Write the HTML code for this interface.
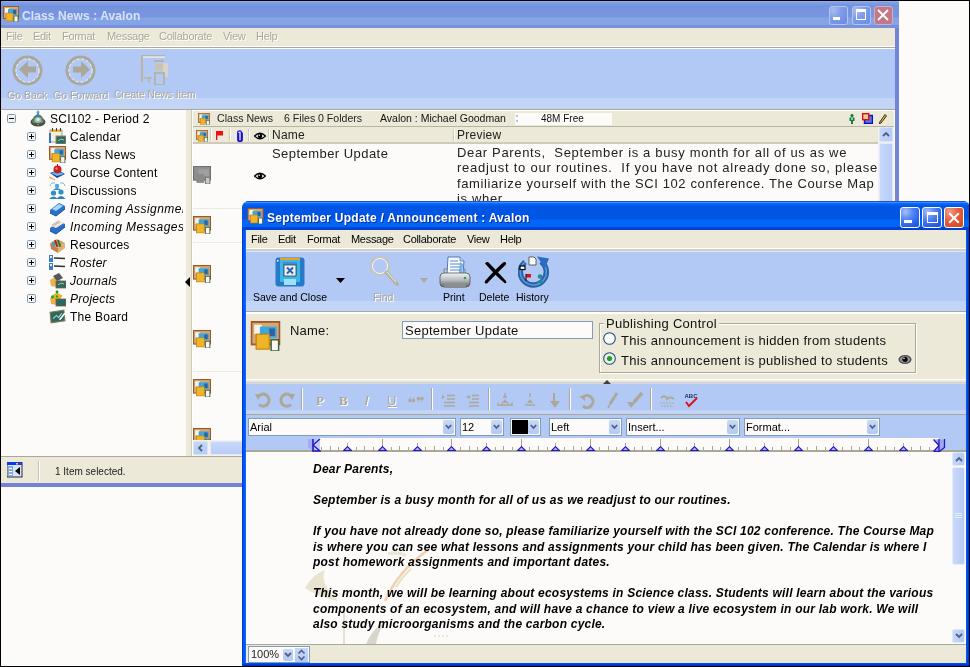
<!DOCTYPE html>
<html><head><meta charset="utf-8">
<style>
*{margin:0;padding:0;box-sizing:border-box}
html,body{width:970px;height:667px;overflow:hidden;background:#fcfbf9;font-family:"Liberation Sans",sans-serif;color:#000}
.a{position:absolute}
.t{position:absolute;white-space:pre;line-height:1}
#frame{position:absolute;left:0;top:0;width:970px;height:667px;border:1px solid #000;z-index:100;pointer-events:none}
/* background window */
#bg{position:absolute;left:0;top:0;width:899px;height:487px;background:#7184d8;overflow:hidden;will-change:transform}
#bgtitle{position:absolute;left:1px;top:1px;width:898px;height:27px;background:linear-gradient(#8eaef0 0,#8eaef0 1px,#7d9de4 1px,#7d9de4 3px,#7592dc 4px,#7896e0 16px,#84a4e6 17px,#84a4e6 24px,#7890dc 24px,#7a90dc 27px)}
.menu{position:absolute;height:18px;background:#ece9d8}
.dis{color:#aca899;text-shadow:1px 1px 0 #fff}
.mi{position:absolute;white-space:pre;font-size:11px;line-height:1;letter-spacing:-0.3px}
.tb{position:absolute;background:#b1c9f4}
.band{position:absolute;background:#c3d5f6}
/* foreground */
#fg{position:absolute;left:242px;top:201px;width:728px;height:466px;background:#0a4fe0;border-radius:7px 7px 0 0;overflow:hidden;will-change:transform}
#fgtitle{position:absolute;left:0;top:0;width:728px;height:29px;background:linear-gradient(#2050d0 0,#2050d0 1px,#3d8fff 1px,#3d8fff 2px,#0a6cff 2px,#0062f6 4px,#0055e5 5px,#0055e5 18px,#0066f8 19px,#0066f8 26px,#0044d4 26px,#0040d0 29px)}
</style></head><body>


<svg width="0" height="0" style="position:absolute">
 <defs>
  <symbol id="cn" viewBox="0 0 16 16">
   <rect x="0.5" y="0.5" width="15" height="12" fill="#d8a870" stroke="#9a5a2a"/>
   <rect x="2" y="2" width="4" height="5" fill="#f4f4f0"/>
   <rect x="5" y="3" width="9" height="6" fill="#3aa8e0"/>
   <rect x="10" y="4" width="3" height="4" fill="#3060a0"/>
   <rect x="3" y="7" width="7" height="8" fill="#f0b428" stroke="#c08010" stroke-width="0.6"/>
   <rect x="11" y="10" width="4" height="6" fill="#f8f8f0" stroke="#406040" stroke-width="0.8"/>
  </symbol>
  <symbol id="cng" viewBox="0 0 16 16">
   <rect x="0.5" y="0.5" width="15" height="12" fill="#909090" stroke="#707070"/>
   <rect x="5" y="3" width="9" height="6" fill="#a0a0a0"/>
   <rect x="3" y="7" width="7" height="8" fill="#8a8a8a"/>
   <rect x="11" y="10" width="4" height="6" fill="#c8c8c8" stroke="#707070" stroke-width="0.8"/>
  </symbol>
  <symbol id="plus" viewBox="0 0 9 9">
   <rect x="0.5" y="0.5" width="8" height="8" rx="1" fill="#f4f2ea" stroke="#7a98bc"/>
   <rect x="2" y="4" width="5" height="1" fill="#000"/>
   <rect x="4" y="2" width="1" height="5" fill="#000"/>
  </symbol>
  <symbol id="minus" viewBox="0 0 9 9">
   <rect x="0.5" y="0.5" width="8" height="8" rx="1" fill="#f4f2ea" stroke="#7a98bc"/>
   <rect x="2" y="4" width="5" height="1" fill="#000"/>
  </symbol>
  <symbol id="eye" viewBox="0 0 12 8">
   <path d="M0.5 4 Q6 -1.5 11.5 4 Q6 9.5 0.5 4Z" fill="#fff" stroke="#000" stroke-width="1.2"/>
   <circle cx="6" cy="4" r="2.3" fill="#000"/>
   <circle cx="5.3" cy="3.3" r="0.7" fill="#fff"/>
  </symbol>
  <symbol id="board" viewBox="0 0 16 16">
   <path d="M1 4 L14 2 L15 12 L2 14Z" fill="#2a6a60" stroke="#8a7a50" stroke-width="1"/>
   <path d="M4 10 L7 7 L9 9 L12 5" stroke="#b8d8d0" stroke-width="1" fill="none"/>
   <path d="M10 11 L15 5" stroke="#fff" stroke-width="1.5"/>
  </symbol>
 </defs>
</svg>
<div id="bg">
  <div id="bgtitle"></div>
  <div class="menu" style="left:1px;top:28px;width:894px"></div>
  <div class="a" style="left:1px;top:46px;width:894px;height:1px;background:#fff"></div>
  <div class="a" style="left:1px;top:47px;width:894px;height:1px;background:#aca899"></div>
  <div class="a" style="left:1px;top:48px;width:894px;height:1px;background:#fff"></div>
  <div class="tb" style="left:1px;top:49px;width:894px;height:50px"></div>
  <div class="band" style="left:1px;top:98px;width:894px;height:11px"></div>
  <div class="a" style="left:1px;top:109px;width:894px;height:1px;background:#aca899"></div>
  <!-- tree -->
  <div class="a" style="left:1px;top:110px;width:185px;height:346px;background:#fcfbf9"></div>
  <div class="a" style="left:186px;top:110px;width:7px;height:346px;background:#ece9d8"></div>
  <!-- list -->
  <div class="a" style="left:193px;top:110px;width:702px;height:346px;background:#fcfbf9"></div>
  <div class="a" style="left:1px;top:456px;width:894px;height:1px;background:#aca899"></div>
  <div class="a" style="left:1px;top:457px;width:894px;height:26px;background:#ece9d8"></div>

  <!-- bg title -->
  <div class="t" style="left:22px;top:10px;font-size:12px;font-weight:bold;color:#d8e2f8;letter-spacing:0.1px">Class News : Avalon</div>
  <!-- bg menu -->
  <div class="mi dis" style="left:6px;top:31px">File</div>
  <div class="mi dis" style="left:33px;top:31px">Edit</div>
  <div class="mi dis" style="left:62px;top:31px">Format</div>
  <div class="mi dis" style="left:107px;top:31px">Message</div>
  <div class="mi dis" style="left:159px;top:31px">Collaborate</div>
  <div class="mi dis" style="left:223px;top:31px">View</div>
  <div class="mi dis" style="left:256px;top:31px">Help</div>
  <!-- bg toolbar labels -->
  <div class="t dis" style="left:7px;top:90px;font-size:10.5px">Go Back</div>
  <div class="t dis" style="left:53px;top:90px;font-size:10.5px">Go Forward</div>
  <div class="t dis" style="left:114px;top:90px;font-size:10.2px">Create News Item</div>

  <!-- tree icons -->
  <svg class="a" style="left:7px;top:114px" width="9" height="9"><use href="#minus"/></svg>
  <svg class="a" style="left:30px;top:110px" width="16" height="17" viewBox="0 0 16 17">
   <ellipse cx="8" cy="12" rx="7.5" ry="4.5" fill="#4a4e48"/>
   <path d="M2 12 Q3 5 8 4 Q13 5 14 12 Q8 15 2 12Z" fill="#5a7a70"/>
   <ellipse cx="8" cy="10" rx="3.5" ry="3" fill="#90c0b0"/>
   <ellipse cx="8" cy="9.5" rx="1.8" ry="1.5" fill="#d8f0e8"/>
   <circle cx="4" cy="12" r="0.8" fill="#c0a030"/><circle cx="12" cy="12" r="0.8" fill="#c0a030"/><circle cx="8" cy="14.5" r="0.8" fill="#c0a030"/>
   <path d="M8 1 V5" stroke="#4a8ae0" stroke-width="2"/>
   <path d="M6 2.5 L8 0 L10 2.5Z" fill="#6aa8f0"/>
  </svg>
  <svg class="a" style="left:27px;top:132px" width="9" height="9"><use href="#plus"/></svg>
  <svg class="a" style="left:49px;top:128px" width="17" height="16" viewBox="0 0 17 16">
   <rect x="1" y="2" width="12" height="12" fill="#f4f0e0" stroke="#8aa0c8" stroke-width="1"/>
   <rect x="1" y="2" width="12" height="2" fill="#f0b030"/>
   <rect x="3" y="0" width="1" height="3" fill="#404040"/><rect x="7" y="0" width="1" height="3" fill="#404040"/><rect x="11" y="0" width="1" height="3" fill="#404040"/>
   <rect x="0" y="5" width="2" height="10" fill="#3a70c0"/>
   <rect x="7" y="8" width="10" height="8" fill="#2a6a60" stroke="#a08860" stroke-width="1"/>
   <path d="M9 13 L12 11 L15 12" stroke="#c0e0d0" stroke-width="0.8" fill="none"/>
  </svg>
  <svg class="a" style="left:27px;top:150px" width="9" height="9"><use href="#plus"/></svg>
  <svg class="a" style="left:49px;top:146px" width="17" height="17"><use href="#cn"/></svg>
  <svg class="a" style="left:27px;top:168px" width="9" height="9"><use href="#plus"/></svg>
  <svg class="a" style="left:49px;top:164px" width="17" height="17" viewBox="0 0 17 17">
   <path d="M1 9 L9 6 L16 10 L8 14Z" fill="#1a3aa0"/>
   <path d="M2 9 L9 7 L15 10 L8 12Z" fill="#60c0f0"/>
   <circle cx="8.5" cy="5.5" r="4" fill="#c82020"/>
   <circle cx="7.5" cy="4.5" r="1.2" fill="#f08080"/>
   <rect x="8" y="0" width="1" height="2" fill="#604020"/>
   <path d="M0 13 L6 16" stroke="#f0a040" stroke-width="1.3"/>
  </svg>
  <svg class="a" style="left:27px;top:186px" width="9" height="9"><use href="#plus"/></svg>
  <svg class="a" style="left:49px;top:182px" width="17" height="17" viewBox="0 0 17 17">
   <circle cx="4.5" cy="11" r="2.6" fill="#2a90c8"/><path d="M0 17 Q4.5 12 9 17Z" fill="#2a80b8"/>
   <circle cx="12" cy="10" r="2.6" fill="#2a90c8"/><path d="M7.5 17 Q12 11 16.5 17Z" fill="#2a80b8"/>
   <circle cx="8" cy="4" r="2.2" fill="#50a8e0"/><path d="M4 8 Q8 4 12 8Z" fill="#4090d0"/>
   <path d="M1 4 Q2 0 6 1 M11 1 Q15 0 16 4" stroke="#70b0e0" stroke-width="1" fill="none"/>
  </svg>
  <svg class="a" style="left:27px;top:204px" width="9" height="9"><use href="#plus"/></svg>
  <svg class="a" style="left:49px;top:200px" width="17" height="17" viewBox="0 0 17 17">
   <path d="M1 10 L10 3 L16 6 L16 9 L7 16 L1 13Z" fill="#2a70c8"/>
   <path d="M3 9 L10 4 L14 6 L7 11Z" fill="#a8d8f8"/>
   <path d="M1 13 L7 16 L16 9" stroke="#1a50a0" stroke-width="1" fill="none"/>
  </svg>
  <svg class="a" style="left:27px;top:222px" width="9" height="9"><use href="#plus"/></svg>
  <svg class="a" style="left:49px;top:218px" width="17" height="17" viewBox="0 0 17 17">
   <path d="M1 10 L10 3 L16 6 L16 9 L7 16 L1 13Z" fill="#2a70c8"/>
   <path d="M2 8 L10 2 L15 5 L7 10Z" fill="#f0e8d8"/>
   <path d="M3 7 L10 3 M4 8 L11 4" stroke="#c09080" stroke-width="0.7"/>
   <path d="M1 13 L7 16 L16 9" stroke="#1a50a0" stroke-width="1" fill="none"/>
  </svg>
  <svg class="a" style="left:27px;top:240px" width="9" height="9"><use href="#plus"/></svg>
  <svg class="a" style="left:49px;top:236px" width="17" height="17" viewBox="0 0 17 17">
   <path d="M1 7 L8 3 L16 7 L9 12Z" fill="#d8a060"/>
   <path d="M1 7 L9 12 L9 17 L2 13Z" fill="#c08050"/>
   <path d="M9 12 L16 7 L16 12 L9 17Z" fill="#e0b070"/>
   <rect x="6" y="4" width="2" height="7" fill="#c02020" transform="rotate(-20 7 7)"/>
   <rect x="9" y="4" width="2" height="7" fill="#208040" transform="rotate(-20 10 7)"/>
   <rect x="3" y="6" width="3" height="4" fill="#40a0c0"/>
  </svg>
  <svg class="a" style="left:27px;top:258px" width="9" height="9"><use href="#plus"/></svg>
  <svg class="a" style="left:49px;top:254px" width="17" height="17" viewBox="0 0 17 17">
   <rect x="0" y="1" width="4" height="7" fill="#3a80c0"/><rect x="1" y="2" width="2" height="2" fill="#e0e8f0"/>
   <rect x="0" y="9" width="4" height="7" fill="#3a80c0"/><rect x="1" y="10" width="2" height="2" fill="#e0e8f0"/>
   <path d="M5 4 L16 4.5 M5 12 L16 12.5" stroke="#303030" stroke-width="1.6"/>
  </svg>
  <svg class="a" style="left:27px;top:276px" width="9" height="9"><use href="#plus"/></svg>
  <svg class="a" style="left:49px;top:272px" width="17" height="17" viewBox="0 0 17 17">
   <path d="M1 8 L6 5 L12 8 L8 15 L2 14Z" fill="#f0b050"/>
   <path d="M4 4 L10 1 L14 6 L8 9Z" fill="#505860"/>
   <rect x="7" y="9" width="10" height="7" fill="#2a6a60" stroke="#806040" stroke-width="0.8"/>
   <path d="M9 13 L12 11 L15 12" stroke="#c0e0d0" stroke-width="0.8" fill="none"/>
  </svg>
  <svg class="a" style="left:27px;top:294px" width="9" height="9"><use href="#plus"/></svg>
  <svg class="a" style="left:49px;top:290px" width="17" height="17" viewBox="0 0 17 17">
   <path d="M1 8 L6 5 L12 8 L8 15 L2 14Z" fill="#f0b050"/>
   <path d="M3 6 L8 3 L13 6 L8 10Z" fill="#f0c020" stroke="#d09010" stroke-width="0.8"/>
   <circle cx="8" cy="2" r="1.4" fill="#10a030"/><circle cx="3.5" cy="7" r="1.4" fill="#10a030"/><circle cx="8" cy="6.5" r="1.2" fill="#10a030"/>
   <rect x="7" y="9" width="10" height="7" fill="#2a6a60" stroke="#806040" stroke-width="0.8"/>
  </svg>
  <svg class="a" style="left:49px;top:308px" width="17" height="17"><use href="#board"/></svg>
  <!-- tree text -->
  <div class="t" style="left:50px;top:113px;font-size:12px;letter-spacing:0.25px">SCI102 - Period 2</div>
  <div class="a" style="left:1px;top:110px;width:182px;height:346px;overflow:hidden">
    <div class="t" style="left:69px;top:21px;font-size:12px;letter-spacing:0.25px">Calendar</div>
    <div class="t" style="left:69px;top:39px;font-size:12px;letter-spacing:0.25px">Class News</div>
    <div class="t" style="left:69px;top:57px;font-size:12px;letter-spacing:0.25px">Course Content</div>
    <div class="t" style="left:69px;top:75px;font-size:12px;letter-spacing:0.25px">Discussions</div>
    <div class="t" style="left:69px;top:93px;font-size:12px;letter-spacing:0.45px;font-style:italic">Incoming Assignments</div>
    <div class="t" style="left:69px;top:111px;font-size:12px;letter-spacing:0.45px;font-style:italic">Incoming Messages</div>
    <div class="t" style="left:69px;top:129px;font-size:12px;letter-spacing:0.25px">Resources</div>
    <div class="t" style="left:69px;top:147px;font-size:12px;letter-spacing:0.25px;font-style:italic">Roster</div>
    <div class="t" style="left:69px;top:165px;font-size:12px;letter-spacing:0.25px;font-style:italic">Journals</div>
    <div class="t" style="left:69px;top:183px;font-size:12px;letter-spacing:0.25px;font-style:italic">Projects</div>
    <div class="t" style="left:69px;top:201px;font-size:12px;letter-spacing:0.25px">The Board</div>
  </div>
  <!-- list header bar -->
  <div class="a" style="left:191px;top:110px;width:1px;height:346px;background:#d0ccbc"></div>
  <div class="a" style="left:192px;top:110px;width:1px;height:346px;background:#fff"></div>
  <div class="a" style="left:193px;top:110px;width:702px;height:1px;background:#fff"></div>
  <div class="a" style="left:193px;top:111px;width:701px;height:15px;background:#ece9d8"></div>
  <div class="a" style="left:193px;top:126px;width:701px;height:1px;background:#b8b4a4"></div>
  <svg class="a" style="left:198px;top:113px" width="12" height="12"><use href="#cn"/></svg>
  <svg class="a" style="left:849px;top:114px" width="6" height="10" viewBox="0 0 6 10"><circle cx="3" cy="1.5" r="1.5" fill="#107030"/><path d="M0.5 3.5 H5.5 V7 H4 V10 H2 V7 H0.5Z" fill="#108040"/><circle cx="3" cy="5" r="0.9" fill="#c0f0e0"/></svg>
  <svg class="a" style="left:862px;top:113px" width="11" height="11" viewBox="0 0 11 11"><rect x="2.5" y="2.5" width="8" height="8" fill="#6070e0" stroke="#0010e0" stroke-width="1.4"/><rect x="0.7" y="0.7" width="6" height="6" fill="#f0d090" stroke="#e01010" stroke-width="1.4"/></svg>
  <svg class="a" style="left:879px;top:114px" width="8" height="10" viewBox="0 0 8 10"><path d="M6 0.5 L7.5 2 L2 9 L0.3 9.7 L0.8 8Z" fill="#f0b020" stroke="#202020" stroke-width="0.9"/></svg>
  <div class="t" style="left:217px;top:113px;font-size:10.6px;color:#222">Class News</div>
  <div class="t" style="left:284px;top:113px;font-size:10.6px;color:#222">6 Files</div>
  <div class="t" style="left:318px;top:113px;font-size:10.6px;color:#222">0 Folders</div>
  <div class="t" style="left:380px;top:113px;font-size:10.5px;color:#111">Avalon : Michael Goodman</div>
  <div class="a" style="left:515px;top:113px;width:97px;height:12px;background:#fcfbf9"></div><div class="a" style="left:516px;top:115px;width:2px;height:2px;background:#a8c4f4"></div><div class="a" style="left:516px;top:120px;width:2px;height:2px;background:#a8c4f4"></div>
  <div class="t" style="left:541px;top:114px;font-size:10px;color:#111">48M Free</div>
  <!-- column header -->
  <div class="a" style="left:193px;top:127px;width:685px;height:15px;background:#ece9d8"></div>
  <div class="a" style="left:193px;top:142px;width:685px;height:2px;background:#cfcbbb"></div>
  <svg class="a" style="left:196px;top:130px" width="12" height="12"><use href="#cn"/></svg>
  <div class="a" style="left:210px;top:129px;width:1px;height:12px;background:#d0ccbc"></div><div class="a" style="left:211px;top:129px;width:1px;height:12px;background:#fff"></div>
  <svg class="a" style="left:216px;top:131px" width="8" height="9" viewBox="0 0 8 9"><rect x="0" y="0" width="1.3" height="9" fill="#e01010"/><rect x="0" y="0" width="7" height="4.5" fill="#f01010"/></svg>
  <div class="a" style="left:229px;top:129px;width:1px;height:12px;background:#d0ccbc"></div><div class="a" style="left:230px;top:129px;width:1px;height:12px;background:#fff"></div>
  <svg class="a" style="left:237px;top:130px" width="6" height="12" viewBox="0 0 6 12"><path d="M1.7 3 V9.5 Q1.7 11 3 11 Q4.3 11 4.3 9.5 V2 Q4.3 0.8 3 0.8 Q0.7 0.8 0.7 2.5 V9.8 Q0.7 11.6 3 11.6 Q5.3 11.6 5.3 9.8 V2.5" fill="none" stroke="#1010e0" stroke-width="1.2"/></svg>
  <div class="a" style="left:248px;top:129px;width:1px;height:12px;background:#d0ccbc"></div><div class="a" style="left:249px;top:129px;width:1px;height:12px;background:#fff"></div>
  <svg class="a" style="left:254px;top:132px" width="12" height="8"><use href="#eye"/></svg>
  <div class="a" style="left:268px;top:129px;width:1px;height:12px;background:#d0ccbc"></div><div class="a" style="left:269px;top:129px;width:1px;height:12px;background:#fff"></div>
  <div class="a" style="left:453px;top:129px;width:1px;height:12px;background:#d0ccbc"></div><div class="a" style="left:454px;top:129px;width:1px;height:12px;background:#fff"></div>
  <!-- vscroll -->
  <div class="a" style="left:878px;top:127px;width:16px;height:313px;background:#f2f1ea"></div>
  <div class="a" style="left:879px;top:127px;width:14px;height:15px;border-radius:2px;background:linear-gradient(90deg,#c6d6f8,#b6cbf6);border:1px solid #d8e4fc"></div>
  <svg class="a" style="left:882px;top:131px" width="8" height="6" viewBox="0 0 8 6"><path d="M1 5 L4 2 L7 5" stroke="#4d6185" stroke-width="1.8" fill="none"/></svg>
  <div class="a" style="left:879px;top:143px;width:14px;height:60px;border-radius:2px;background:linear-gradient(90deg,#c8d8fa,#b8ccf6);border:1px solid #e0e8fc"></div>
  <!-- row lines & icons -->
  <div class="a" style="left:193px;top:208px;width:685px;height:1px;background:#ecebe2"></div>
  <div class="a" style="left:193px;top:242px;width:685px;height:1px;background:#ecebe2"></div>
  <div class="a" style="left:193px;top:371px;width:685px;height:1px;background:#ecebe2"></div>
  <svg class="a" style="left:193px;top:166px" width="18" height="18"><use href="#cng"/></svg>
  <svg class="a" style="left:254px;top:172px" width="12" height="8"><use href="#eye"/></svg>
  <svg class="a" style="left:193px;top:216px" width="18" height="18"><use href="#cn"/></svg>
  <svg class="a" style="left:193px;top:265px" width="18" height="18"><use href="#cn"/></svg>
  <svg class="a" style="left:193px;top:330px" width="18" height="18"><use href="#cn"/></svg>
  <svg class="a" style="left:193px;top:379px" width="18" height="18"><use href="#cn"/></svg>
  <div class="a" style="left:193px;top:428px;width:18px;height:12px;overflow:hidden"><svg width="18" height="18"><use href="#cn"/></svg></div>
  <!-- hscroll -->
  <div class="a" style="left:193px;top:440px;width:685px;height:16px;background:#f2f1ea"></div>
  <div class="a" style="left:193px;top:441px;width:15px;height:14px;border-radius:2px;background:linear-gradient(#c6d6f8,#b6cbf6);border:1px solid #d8e4fc"></div>
  <svg class="a" style="left:197px;top:444px" width="6" height="8" viewBox="0 0 6 8"><path d="M5 1 L2 4 L5 7" stroke="#4d6185" stroke-width="1.8" fill="none"/></svg>
  <div class="a" style="left:210px;top:441px;width:100px;height:14px;border-radius:2px;background:linear-gradient(#c8d8fa,#b8ccf6);border:1px solid #e0e8fc"></div>
  <!-- splitter arrow -->
  <svg class="a" style="left:185px;top:277px" width="5" height="10" viewBox="0 0 5 10"><path d="M5 0 L0 5 L5 10Z" fill="#000"/></svg>
  <!-- status icon -->
  <svg class="a" style="left:7px;top:462px" width="16" height="16" viewBox="0 0 16 16">
   <rect x="0" y="0" width="15" height="15" fill="#d8e4f8" stroke="#203050" stroke-width="1"/>
   <rect x="0" y="0" width="15" height="3" fill="#0a3ae0"/>
   <rect x="12" y="1" width="2" height="1.5" fill="#e01010"/><rect x="9" y="1" width="2" height="1.5" fill="#c0d0f0"/>
   <rect x="1" y="4" width="5" height="10" fill="#8aa8d8"/>
   <rect x="2" y="6" width="3" height="1" fill="#fff"/><rect x="2" y="9" width="3" height="1" fill="#fff"/><rect x="2" y="12" width="3" height="1" fill="#fff"/>
   <path d="M13 5 L8 9 L13 13Z" fill="#000"/>
  </svg>
  <!-- bg title icon and buttons -->
  <svg class="a" style="left:3px;top:6px" width="16" height="16"><use href="#cn"/></svg>
  <div class="a" style="left:829px;top:6px;width:19px;height:19px;border-radius:3px;background:radial-gradient(circle at 20% 20%,#a8bcf0 0,#7f9de8 40%,#6a8ae4);border:1px solid #b4c4f0"></div>
  <div class="a" style="left:833px;top:17px;width:7px;height:3px;background:#fff"></div>
  <div class="a" style="left:852px;top:6px;width:19px;height:19px;border-radius:3px;background:radial-gradient(circle at 20% 20%,#a8bcf0 0,#7f9de8 40%,#6a8ae4);border:1px solid #b4c4f0"></div>
  <div class="a" style="left:856px;top:9px;width:10px;height:11px;border:1px solid #fff;border-top-width:3px"></div>
  <div class="a" style="left:874px;top:6px;width:19px;height:19px;border-radius:3px;background:#c27888;border:1px solid #ccb0c8"></div>
  <svg class="a" style="left:877px;top:9px" width="12" height="12" viewBox="0 0 12 12"><path d="M1 1 L11 11 M11 1 L1 11" stroke="#fff" stroke-width="1.8"/></svg>
  <!-- bg toolbar icons -->
  <svg class="a" style="left:12px;top:55px" width="32" height="32" viewBox="0 0 32 32">
   <circle cx="15.5" cy="15.5" r="13.5" fill="none" stroke="#aca899" stroke-width="3"/>
   <circle cx="15.5" cy="15.5" r="11.6" fill="none" stroke="#fff" stroke-width="0.8" stroke-dasharray="3 2"/>
   <path d="M7 14.5 L16 6 V11.5 H24 V17.5 H16 V23Z" fill="#aca899"/>
  </svg>
  <svg class="a" style="left:65px;top:55px" width="32" height="32" viewBox="0 0 32 32">
   <circle cx="15.5" cy="15.5" r="13.5" fill="none" stroke="#aca899" stroke-width="3"/>
   <circle cx="15.5" cy="15.5" r="11.6" fill="none" stroke="#fff" stroke-width="0.8" stroke-dasharray="3 2"/>
   <path d="M25 14.5 L16 6 V11.5 H8 V17.5 H16 V23Z" fill="#aca899"/>
  </svg>
  <svg class="a" style="left:140px;top:54px" width="31" height="31" viewBox="0 0 31 31">
   <path d="M2 28 V2 H25" fill="none" stroke="#b8b4a4" stroke-width="2"/>
   <path d="M3 3 H25" stroke="#fff" stroke-width="1"/>
   <rect x="14" y="6" width="10" height="2" fill="#b8b4a4"/>
   <rect x="15" y="10" width="8" height="6" fill="#c8c4b4"/>
   <rect x="23" y="9" width="5" height="14" fill="#d8d4c8"/>
   <rect x="15" y="19" width="9" height="12" fill="none" stroke="#b8b4a4" stroke-width="2"/>
   <path d="M4 24 H12 M9 24 V29" stroke="#b8b4a4" stroke-width="1.5"/>
  </svg>
  <div class="t" style="left:272px;top:129px;font-size:12px;letter-spacing:0.25px;color:#222">Name</div>
  <div class="t" style="left:457px;top:129px;font-size:12px;letter-spacing:0.25px;color:#222">Preview</div>
  <div class="t" style="left:272px;top:147px;font-size:13px;letter-spacing:0.45px;color:#222">September Update</div>
  <div class="a" style="left:457px;top:143px;width:420px;height:60px;overflow:hidden">
    <div class="t" style="left:0;top:3px;font-size:13px;letter-spacing:0.66px;color:#222">Dear Parents,  September is a busy month for all of us as we</div>
    <div class="t" style="left:0;top:18px;font-size:13px;letter-spacing:0.76px;color:#222">readjust to our routines.  If you have not already done so, please</div>
    <div class="t" style="left:0;top:34px;font-size:13px;letter-spacing:0.61px;color:#222">familiarize yourself with the SCI 102 conference. The Course Map</div>
    <div class="t" style="left:0;top:49px;font-size:13px;letter-spacing:0.66px;color:#222">is wher</div>
  </div>
  <!-- status -->
  <div class="t" style="left:55px;top:467px;font-size:10px;color:#222">1 Item selected.</div>
  <div class="a" style="left:38px;top:461px;width:1px;height:20px;background:#c5c2b2"></div>
  <div class="a" style="left:39px;top:461px;width:1px;height:20px;background:#fff"></div>
</div>

<div id="fg">
  <div class="a" style="left:0;top:20px;width:4px;height:446px;background:linear-gradient(90deg,#0838d8 0,#0838d8 1px,#0054ee 1px,#0058f2 3px,#1068ff 3px)"></div>
  <div class="a" style="left:724px;top:20px;width:4px;height:446px;background:linear-gradient(90deg,#0058f2 0,#0050ee 1px,#0040e0 2px,#0030c8 3px)"></div>
  <div class="a" style="left:0;top:462px;width:728px;height:4px;background:linear-gradient(#0058f2 0,#0048e4 1px,#0038d0 2px,#0030c0 3px)"></div>
  <div id="fgtitle"></div>
  <div class="menu" style="left:4px;top:29px;width:720px;height:19px"></div>
  <div class="a" style="left:4px;top:47px;width:720px;height:1px;background:#fff"></div>
  <div class="a" style="left:4px;top:48px;width:720px;height:2px;background:#d0cec6"></div>
  <div class="a" style="left:4px;top:50px;width:720px;height:1px;background:#d8e4f8"></div>
  <div class="tb" style="left:4px;top:51px;width:720px;height:50px"></div>
  <div class="band" style="left:4px;top:100px;width:720px;height:10px"></div>
  <div class="a" style="left:4px;top:110px;width:720px;height:1px;background:#aca899"></div>
  <div class="a" style="left:4px;top:111px;width:720px;height:2px;background:#fff"></div>
  <div class="a" style="left:4px;top:113px;width:720px;height:65px;background:#ece9d8"></div>
  <div class="a" style="left:4px;top:178px;width:720px;height:1px;background:#fff"></div>
  <div class="a" style="left:4px;top:179px;width:720px;height:2px;background:#ece9d8"></div>
  <div class="a" style="left:4px;top:181px;width:720px;height:1px;background:#d4d0c8"></div>
  <div class="a" style="left:4px;top:182px;width:720px;height:1px;background:#d0dcf4"></div>
  <div class="tb" style="left:4px;top:183px;width:720px;height:26px"></div>
  <div class="band" style="left:4px;top:209px;width:720px;height:4px"></div>
  <div class="a" style="left:4px;top:213px;width:720px;height:1px;background:#aca899"></div>
  <div class="tb" style="left:4px;top:214px;width:720px;height:36px"></div>
  <div class="a" style="left:4px;top:250px;width:720px;height:1px;background:#aca899"></div>
  <div class="a" style="left:4px;top:251px;width:720px;height:192px;background:#fcfbf9"></div>
  <div class="a" style="left:4px;top:443px;width:720px;height:1px;background:#aca899"></div>
  <div class="a" style="left:4px;top:444px;width:720px;height:18px;background:#ece9d8"></div>

  <!-- fg title -->
  <svg class="a" style="left:5px;top:7px" width="17" height="16"><use href="#cn"/></svg>
  <div class="t" style="left:25px;top:11px;font-size:12px;font-weight:bold;color:#fff;letter-spacing:0.25px;text-shadow:1px 1px 0 #0a2a9a">September Update / Announcement : Avalon</div>
  <div class="a" style="left:658px;top:6px;width:20px;height:21px;border-radius:3px;background:radial-gradient(circle at 25% 20%,#a8c0f8 0,#5888f4 35%,#2a62ec 70%,#1c50d8);border:1px solid #fff"></div>
  <div class="a" style="left:662px;top:19px;width:8px;height:3px;background:#fff"></div>
  <div class="a" style="left:680px;top:6px;width:20px;height:21px;border-radius:3px;background:radial-gradient(circle at 25% 20%,#a8c0f8 0,#5888f4 35%,#2a62ec 70%,#1c50d8);border:1px solid #fff"></div>
  <div class="a" style="left:685px;top:11px;width:11px;height:11px;border:1px solid #fff;border-top-width:3px"></div>
  <div class="a" style="left:702px;top:6px;width:20px;height:21px;border-radius:3px;background:radial-gradient(circle at 25% 20%,#f0a088 0,#e86040 40%,#d04420);border:1px solid #fff"></div>
  <svg class="a" style="left:706px;top:11px" width="12" height="12" viewBox="0 0 12 12"><path d="M1.2 1.2 L10.8 10.8 M10.8 1.2 L1.2 10.8" stroke="#fff" stroke-width="2"/></svg>
  <!-- fg menu -->
  <div class="mi" style="left:9px;top:33px;letter-spacing:-0.3px">File</div>
  <div class="mi" style="left:36px;top:33px;letter-spacing:-0.3px">Edit</div>
  <div class="mi" style="left:65px;top:33px;letter-spacing:-0.3px">Format</div>
  <div class="mi" style="left:109px;top:33px;letter-spacing:-0.3px">Message</div>
  <div class="mi" style="left:161px;top:33px;letter-spacing:-0.3px">Collaborate</div>
  <div class="mi" style="left:225px;top:33px;letter-spacing:-0.3px">View</div>
  <div class="mi" style="left:258px;top:33px;letter-spacing:-0.3px">Help</div>
  <!-- fg toolbar -->
  <svg class="a" style="left:33px;top:56px" width="30" height="30" viewBox="0 0 30 30">
   <rect x="0.5" y="0.5" width="29" height="29" rx="3" fill="#2a78c8"/>
   <rect x="5" y="1" width="20" height="24" fill="#38b8e8"/>
   <rect x="5" y="1" width="20" height="2" fill="#f0a020"/>
   <rect x="8" y="5" width="14" height="14" fill="#4090d0"/>
   <rect x="9" y="8" width="12" height="11" fill="#e8f0f8" stroke="#404040" stroke-width="0.8"/>
   <path d="M12 10.5 L18 16.5 M18 10.5 L12 16.5" stroke="#2a60b0" stroke-width="2"/>
   <rect x="9" y="22" width="12" height="6" fill="#a0e0f8"/>
   <rect x="2" y="3" width="1.5" height="1.5" fill="#fff"/>
  </svg>
  <svg class="a" style="left:94px;top:77px" width="9" height="5" viewBox="0 0 9 5"><path d="M0 0 H9 L4.5 5Z" fill="#000"/></svg>
  <div class="t" style="left:11px;top:91px;font-size:10.5px;color:#000">Save and Close</div>
  <svg class="a" style="left:126px;top:53px" width="32" height="34" viewBox="0 0 32 34">
   <circle cx="12" cy="12" r="9" fill="none" stroke="#c8c4b4" stroke-width="2.2"/>
   <circle cx="12" cy="12" r="7.6" fill="none" stroke="#fff" stroke-width="0.8"/>
   <path d="M18.5 18.5 L29 30" stroke="#b8b4a4" stroke-width="4" stroke-linecap="round"/>
   <path d="M19 18 L28 28" stroke="#fff" stroke-width="0.8"/>
  </svg>
  <svg class="a" style="left:178px;top:77px" width="8" height="5" viewBox="0 0 8 5"><path d="M0 0 H8 L4 5Z" fill="#aca899"/></svg>
  <div class="t dis" style="left:131px;top:91px;font-size:10.5px">Find</div>
  <svg class="a" style="left:196px;top:55px" width="33" height="33" viewBox="0 0 33 33">
   <defs><linearGradient id="pg" x1="0" y1="0" x2="0" y2="1"><stop offset="0" stop-color="#f4f4f4"/><stop offset="0.5" stop-color="#b8bcc0"/><stop offset="1" stop-color="#606468"/></linearGradient></defs>
   <path d="M6 13 H27 V18 H6Z" fill="#c8ccd0" stroke="#707478" stroke-width="0.8"/>
   <path d="M10 1 L22 1 L26 5 L25 18 L9 18Z" fill="#f8fbff" stroke="#5078b0" stroke-width="1"/>
   <path d="M22 1 L22 5 L26 5" fill="#c0d8f0" stroke="#5078b0" stroke-width="0.8"/>
   <path d="M12 5 H20 M12 8 H22 M12 11 H22 M12 14 H22" stroke="#5a88c8" stroke-width="1"/>
   <path d="M22 6 L25 8 L24 17 L21 17Z" fill="#3a90e0" opacity="0.7"/>
   <rect x="2" y="17" width="30" height="14" rx="4" fill="url(#pg)" stroke="#505458" stroke-width="0.8"/>
   <rect x="6" y="28" width="22" height="4" rx="1.5" fill="#8a8e92"/>
   <circle cx="27" cy="22" r="1.3" fill="#20b040"/>
  </svg>
  <div class="t" style="left:201px;top:91px;font-size:10.5px;color:#000">Print</div>
  <svg class="a" style="left:241px;top:59px" width="25" height="25" viewBox="0 0 25 25">
   <path d="M2 3.5 Q4 1 6 3 Q14 11 23 21 Q24 24 21.5 23 Q12 15 2 3.5Z" fill="#000"/>
   <path d="M22 2 Q24 3 22.5 5 Q14 13 4 23.5 Q1 24 2 21 Q11 11 19.5 3 Q21 1.5 22 2Z" fill="#000"/>
  </svg>
  <div class="t" style="left:237px;top:91px;font-size:10.5px;color:#000">Delete</div>
  <svg class="a" style="left:276px;top:55px" width="33" height="33" viewBox="0 0 33 33">
   <path d="M23 5.5 A13 13 0 1 1 7 6" fill="none" stroke="#2a64a8" stroke-width="5.5"/>
   <path d="M23 5.5 A13 13 0 1 1 7 6" fill="none" stroke="#5a98d8" stroke-width="1.5"/>
   <path d="M19 0.5 L31 2.5 L27 12Z" fill="#2a6cc0"/>
   <path d="M11 1 H16 L18 3 V9 H11Z" fill="#fff" stroke="#404040" stroke-width="0.8"/>
   <rect x="2" y="10" width="5" height="3.5" fill="#fff" stroke="#000" stroke-width="1.2"/>
   <path d="M8 18 H13 V21.5 H8Z" fill="#e01010"/><path d="M8 18 V25" stroke="#202020" stroke-width="1.2"/>
   <circle cx="22" cy="20.5" r="2.2" fill="#208898"/><path d="M19 27 Q22 21 25 27Z" fill="#208898"/>
  </svg>
  <div class="t" style="left:274px;top:91px;font-size:10.5px;color:#000">History</div>
  <!-- name panel -->
  <svg class="a" style="left:8px;top:120px" width="31" height="30" viewBox="0 0 16 16"><use href="#cn"/></svg>
  <div class="t" style="left:48px;top:123px;font-size:13px;letter-spacing:0.2px;color:#111">Name:</div>
  <div class="a" style="left:160px;top:120px;width:191px;height:18px;background:#fcfbf9;border:1px solid #7f9db9"></div>
  <div class="t" style="left:163px;top:123px;font-size:13px;letter-spacing:0.28px;color:#111">September Update</div>
  <div class="a" style="left:357px;top:122px;width:317px;height:50px;border:1px solid #aca899;box-shadow:1px 1px 0 #fff, inset 1px 1px 0 #fff"></div>
  <div class="t" style="left:362px;top:116px;font-size:13px;letter-spacing:0.3px;color:#111;background:#ece9d8;padding:0 2px">Publishing Control</div>
  <svg class="a" style="left:361px;top:131px" width="13" height="13" viewBox="0 0 13 13"><circle cx="6.5" cy="6.5" r="5.8" fill="#fcfcfa" stroke="#1c5180" stroke-width="1.1"/></svg>
  <svg class="a" style="left:361px;top:151px" width="13" height="13" viewBox="0 0 13 13"><circle cx="6.5" cy="6.5" r="5.8" fill="#f0f0ea" stroke="#1c5180" stroke-width="1.1"/><circle cx="6.5" cy="6.5" r="2.6" fill="#21a121"/></svg>
  <div class="t" style="left:379px;top:133px;font-size:13px;letter-spacing:0.32px;color:#111">This announcement is hidden from students</div>
  <div class="t" style="left:379px;top:153px;font-size:13px;letter-spacing:0.32px;color:#111">This announcement is published to students</div>
  <svg class="a" style="left:656px;top:153px" width="14" height="11" viewBox="0 0 14 11"><ellipse cx="7" cy="5.5" rx="6.5" ry="4.6" fill="#505050"/><ellipse cx="7" cy="5.5" rx="5" ry="3.2" fill="#9a9a9a"/><circle cx="7" cy="5.3" r="2.6" fill="#000"/><circle cx="6" cy="4.4" r="0.8" fill="#ddd"/></svg>
  <svg class="a" style="left:361px;top:179px" width="8" height="4" viewBox="0 0 8 4"><path d="M0 4 L4 0 L8 4Z" fill="#404040"/></svg>
  <!-- format toolbar -->
  <svg class="a" style="left:13px;top:191px" width="16" height="16" viewBox="0 0 16 16"><path d="M3 5 A6 6 0 1 1 4 12.5" fill="none" stroke="#aca899" stroke-width="3"/><path d="M0 2 L7 2 L3 8Z" fill="#aca899"/></svg>
  <svg class="a" style="left:37px;top:191px" width="16" height="16" viewBox="0 0 16 16"><path d="M13 5 A6 6 0 1 0 12 12.5" fill="none" stroke="#aca899" stroke-width="3"/><path d="M16 2 L9 2 L13 8Z" fill="#aca899"/></svg>
  <div class="a" style="left:59px;top:187px;width:1px;height:22px;background:#aca899"></div><div class="a" style="left:60px;top:187px;width:1px;height:22px;background:#fff"></div>
  <div class="t dis" style="left:74px;top:193px;font-size:13px;font-weight:bold;font-family:'Liberation Serif',serif">P</div>
  <div class="t dis" style="left:97px;top:193px;font-size:13px;font-weight:bold;font-family:'Liberation Serif',serif">B</div>
  <div class="t dis" style="left:123px;top:193px;font-size:13px;font-weight:bold">/</div>
  <div class="t dis" style="left:145px;top:193px;font-size:13px;font-family:'Liberation Sans',sans-serif;text-decoration:underline">U</div>
  <svg class="a" style="left:166px;top:195px" width="16" height="7" viewBox="0 0 16 7"><g fill="#aca899"><circle cx="2" cy="4.5" r="1.7"/><circle cx="5.5" cy="4.5" r="1.7"/><circle cx="10.5" cy="2.5" r="1.7"/><circle cx="14" cy="2.5" r="1.7"/><path d="M0.5 4 L2.5 0.5 L3 1.5Z M4 4 L6 0.5 L6.5 1.5Z M12 3 L10 6.5 L9.5 5.5Z M15.5 3 L13.5 6.5 L13 5.5Z"/></g></svg>
  <div class="a" style="left:189px;top:187px;width:1px;height:22px;background:#aca899"></div><div class="a" style="left:190px;top:187px;width:1px;height:22px;background:#fff"></div>
  <svg class="a" style="left:199px;top:193px" width="15" height="14" viewBox="0 0 15 14"><path d="M1 1 L4 3 L1 5Z" fill="#aca899"/><path d="M6 1.5 H14 M6 5 H14 M3 8.5 H14 M3 12 H14" stroke="#aca899" stroke-width="1.6"/></svg>
  <svg class="a" style="left:223px;top:193px" width="15" height="14" viewBox="0 0 15 14"><path d="M5 1 L1 3 L5 5Z" fill="#aca899"/><path d="M7 1.5 H14 M7 5 H14 M4 8.5 H14 M4 12 H14" stroke="#aca899" stroke-width="1.6"/></svg>
  <div class="a" style="left:246px;top:187px;width:1px;height:22px;background:#aca899"></div><div class="a" style="left:247px;top:187px;width:1px;height:22px;background:#fff"></div>
  <svg class="a" style="left:254px;top:192px" width="18" height="15" viewBox="0 0 18 15"><path d="M9 0 V5 M7 4 H11 M1 12 H17" stroke="#aca899" stroke-width="1.5"/><path d="M2 9 V13 M6 9 V13 M12 9 V13 M16 9 V13" stroke="#aca899" stroke-width="1"/><path d="M9 6 L6 10 H12Z" fill="#aca899"/></svg>
  <svg class="a" style="left:282px;top:192px" width="12" height="15" viewBox="0 0 12 15"><path d="M6 0 V4 M1 12 H11" stroke="#aca899" stroke-width="1.5"/><path d="M6 6 L3 10 H9Z" fill="#aca899"/></svg>
  <svg class="a" style="left:308px;top:192px" width="10" height="16" viewBox="0 0 10 16"><path d="M4 0 V8" stroke="#aca899" stroke-width="2"/><path d="M0 8 L5 15 L10 8Z" fill="#aca899"/></svg>
  <div class="a" style="left:327px;top:187px;width:1px;height:22px;background:#aca899"></div><div class="a" style="left:328px;top:187px;width:1px;height:22px;background:#fff"></div>
  <svg class="a" style="left:337px;top:192px" width="16" height="16" viewBox="0 0 16 16"><path d="M4 4 A6 6 0 1 1 4 13" fill="none" stroke="#aca899" stroke-width="3"/><path d="M0 3 H6 V8Z" fill="#aca899"/></svg>
  <svg class="a" style="left:365px;top:191px" width="12" height="17" viewBox="0 0 12 17"><path d="M10 1 L3 12" stroke="#aca899" stroke-width="3"/><path d="M3 12 L1 16" stroke="#aca899" stroke-width="1.5"/></svg>
  <svg class="a" style="left:384px;top:191px" width="18" height="17" viewBox="0 0 18 17"><path d="M16 1 L8 10" stroke="#aca899" stroke-width="3.5"/><path d="M1 10 H10 L5 16Z" fill="#aca899"/></svg>
  <div class="a" style="left:408px;top:187px;width:1px;height:22px;background:#aca899"></div><div class="a" style="left:409px;top:187px;width:1px;height:22px;background:#fff"></div>
  <svg class="a" style="left:417px;top:192px" width="17" height="15" viewBox="0 0 17 15"><path d="M2 5 Q6 1 8 6 Q11 3 15 6" stroke="#aca899" stroke-width="2" fill="none"/><path d="M1 10 H16 M2 13 H15" stroke="#aca899" stroke-width="1.2" stroke-dasharray="2 1"/></svg>
  <svg class="a" style="left:442px;top:191px" width="14" height="16" viewBox="0 0 14 16"><text x="0.5" y="6" font-size="6" font-weight="bold" font-family="Liberation Sans" fill="#203060">ABC</text><path d="M2 10 L5 14 L13 6" stroke="#e01020" stroke-width="2" fill="none"/></svg>
  <div class="a" style="left:6px;top:217px;width:208px;height:18px;background:#fcfbf9;border:1px solid #7f9db9"></div>
  <div class="a" style="left:201px;top:219px;width:11px;height:14px;border-radius:2px;background:linear-gradient(#c8d8f8,#b4c8f2)"></div>
  <svg class="a" style="left:203px;top:223px" width="7" height="6" viewBox="0 0 7 6"><path d="M0.8 1 L3.5 4 L6.2 1" stroke="#4d6185" stroke-width="1.8" fill="none"/></svg>
  <div class="t" style="left:8px;top:221px;font-size:11px;color:#000">Arial</div>
  <div class="a" style="left:218px;top:217px;width:44px;height:18px;background:#fcfbf9;border:1px solid #7f9db9"></div>
  <div class="a" style="left:249px;top:219px;width:11px;height:14px;border-radius:2px;background:linear-gradient(#c8d8f8,#b4c8f2)"></div>
  <svg class="a" style="left:251px;top:223px" width="7" height="6" viewBox="0 0 7 6"><path d="M0.8 1 L3.5 4 L6.2 1" stroke="#4d6185" stroke-width="1.8" fill="none"/></svg>
  <div class="t" style="left:220px;top:221px;font-size:11px;color:#000">12</div>
  <div class="a" style="left:268px;top:217px;width:31px;height:18px;background:#fcfbf9;border:1px solid #7f9db9"></div>
  <div class="a" style="left:286px;top:219px;width:11px;height:14px;border-radius:2px;background:linear-gradient(#c8d8f8,#b4c8f2)"></div>
  <svg class="a" style="left:288px;top:223px" width="7" height="6" viewBox="0 0 7 6"><path d="M0.8 1 L3.5 4 L6.2 1" stroke="#4d6185" stroke-width="1.8" fill="none"/></svg>
  <div class="a" style="left:270px;top:219px;width:16px;height:14px;background:#000"></div>
  <div class="a" style="left:307px;top:217px;width:73px;height:18px;background:#fcfbf9;border:1px solid #7f9db9"></div>
  <div class="a" style="left:367px;top:219px;width:11px;height:14px;border-radius:2px;background:linear-gradient(#c8d8f8,#b4c8f2)"></div>
  <svg class="a" style="left:369px;top:223px" width="7" height="6" viewBox="0 0 7 6"><path d="M0.8 1 L3.5 4 L6.2 1" stroke="#4d6185" stroke-width="1.8" fill="none"/></svg>
  <div class="t" style="left:309px;top:221px;font-size:11px;color:#000">Left</div>
  <div class="a" style="left:384px;top:217px;width:114px;height:18px;background:#fcfbf9;border:1px solid #7f9db9"></div>
  <div class="a" style="left:485px;top:219px;width:11px;height:14px;border-radius:2px;background:linear-gradient(#c8d8f8,#b4c8f2)"></div>
  <svg class="a" style="left:487px;top:223px" width="7" height="6" viewBox="0 0 7 6"><path d="M0.8 1 L3.5 4 L6.2 1" stroke="#4d6185" stroke-width="1.8" fill="none"/></svg>
  <div class="t" style="left:386px;top:221px;font-size:11px;color:#000">Insert...</div>
  <div class="a" style="left:502px;top:217px;width:136px;height:18px;background:#fcfbf9;border:1px solid #7f9db9"></div>
  <div class="a" style="left:625px;top:219px;width:11px;height:14px;border-radius:2px;background:linear-gradient(#c8d8f8,#b4c8f2)"></div>
  <svg class="a" style="left:627px;top:223px" width="7" height="6" viewBox="0 0 7 6"><path d="M0.8 1 L3.5 4 L6.2 1" stroke="#4d6185" stroke-width="1.8" fill="none"/></svg>
  <div class="t" style="left:504px;top:221px;font-size:11px;color:#000">Format...</div>
  <div class="a" style="left:77px;top:237px;width:620px;height:13px;background:#fcfbf9"></div>
  <div class="a" style="left:4px;top:249px;width:720px;height:2px;background:#aca899"></div>
  <div class="a" style="left:79px;top:246px;width:1px;height:3px;background:#a8a490"></div><div class="a" style="left:88px;top:245px;width:1px;height:4px;background:#a8a490"></div><div class="a" style="left:96px;top:246px;width:1px;height:3px;background:#a8a490"></div><div class="a" style="left:105px;top:242px;width:1px;height:4px;background:#a8a490"></div><svg class="a" style="left:101px;top:245px" width="9" height="5" viewBox="0 0 9 5"><path d="M0.7 4.5 L4.5 0.7 L8.3 4.5Z" fill="#b0b8f0" stroke="#2818c8" stroke-width="1.2"/></svg><div class="a" style="left:114px;top:246px;width:1px;height:3px;background:#a8a490"></div><div class="a" style="left:122px;top:245px;width:1px;height:4px;background:#a8a490"></div><div class="a" style="left:131px;top:246px;width:1px;height:3px;background:#a8a490"></div><div class="a" style="left:140px;top:238px;width:1px;height:11px;background:#a8a490"></div><div class="a" style="left:140px;top:242px;width:1px;height:4px;background:#a8a490"></div><svg class="a" style="left:136px;top:245px" width="9" height="5" viewBox="0 0 9 5"><path d="M0.7 4.5 L4.5 0.7 L8.3 4.5Z" fill="#b0b8f0" stroke="#2818c8" stroke-width="1.2"/></svg><div class="a" style="left:149px;top:246px;width:1px;height:3px;background:#a8a490"></div><div class="a" style="left:157px;top:245px;width:1px;height:4px;background:#a8a490"></div><div class="a" style="left:166px;top:246px;width:1px;height:3px;background:#a8a490"></div><div class="a" style="left:175px;top:242px;width:1px;height:4px;background:#a8a490"></div><svg class="a" style="left:171px;top:245px" width="9" height="5" viewBox="0 0 9 5"><path d="M0.7 4.5 L4.5 0.7 L8.3 4.5Z" fill="#b0b8f0" stroke="#2818c8" stroke-width="1.2"/></svg><div class="a" style="left:183px;top:246px;width:1px;height:3px;background:#a8a490"></div><div class="a" style="left:192px;top:245px;width:1px;height:4px;background:#a8a490"></div><div class="a" style="left:201px;top:246px;width:1px;height:3px;background:#a8a490"></div><div class="a" style="left:209px;top:238px;width:1px;height:11px;background:#a8a490"></div><div class="a" style="left:209px;top:242px;width:1px;height:4px;background:#a8a490"></div><svg class="a" style="left:205px;top:245px" width="9" height="5" viewBox="0 0 9 5"><path d="M0.7 4.5 L4.5 0.7 L8.3 4.5Z" fill="#b0b8f0" stroke="#2818c8" stroke-width="1.2"/></svg><div class="a" style="left:218px;top:246px;width:1px;height:3px;background:#a8a490"></div><div class="a" style="left:227px;top:245px;width:1px;height:4px;background:#a8a490"></div><div class="a" style="left:235px;top:246px;width:1px;height:3px;background:#a8a490"></div><div class="a" style="left:244px;top:242px;width:1px;height:4px;background:#a8a490"></div><svg class="a" style="left:240px;top:245px" width="9" height="5" viewBox="0 0 9 5"><path d="M0.7 4.5 L4.5 0.7 L8.3 4.5Z" fill="#b0b8f0" stroke="#2818c8" stroke-width="1.2"/></svg><div class="a" style="left:253px;top:246px;width:1px;height:3px;background:#a8a490"></div><div class="a" style="left:261px;top:245px;width:1px;height:4px;background:#a8a490"></div><div class="a" style="left:270px;top:246px;width:1px;height:3px;background:#a8a490"></div><div class="a" style="left:279px;top:238px;width:1px;height:11px;background:#a8a490"></div><div class="a" style="left:279px;top:242px;width:1px;height:4px;background:#a8a490"></div><svg class="a" style="left:275px;top:245px" width="9" height="5" viewBox="0 0 9 5"><path d="M0.7 4.5 L4.5 0.7 L8.3 4.5Z" fill="#b0b8f0" stroke="#2818c8" stroke-width="1.2"/></svg><div class="a" style="left:287px;top:246px;width:1px;height:3px;background:#a8a490"></div><div class="a" style="left:296px;top:245px;width:1px;height:4px;background:#a8a490"></div><div class="a" style="left:305px;top:246px;width:1px;height:3px;background:#a8a490"></div><div class="a" style="left:313px;top:242px;width:1px;height:4px;background:#a8a490"></div><svg class="a" style="left:309px;top:245px" width="9" height="5" viewBox="0 0 9 5"><path d="M0.7 4.5 L4.5 0.7 L8.3 4.5Z" fill="#b0b8f0" stroke="#2818c8" stroke-width="1.2"/></svg><div class="a" style="left:322px;top:246px;width:1px;height:3px;background:#a8a490"></div><div class="a" style="left:331px;top:245px;width:1px;height:4px;background:#a8a490"></div><div class="a" style="left:339px;top:246px;width:1px;height:3px;background:#a8a490"></div><div class="a" style="left:348px;top:238px;width:1px;height:11px;background:#a8a490"></div><div class="a" style="left:348px;top:242px;width:1px;height:4px;background:#a8a490"></div><svg class="a" style="left:344px;top:245px" width="9" height="5" viewBox="0 0 9 5"><path d="M0.7 4.5 L4.5 0.7 L8.3 4.5Z" fill="#b0b8f0" stroke="#2818c8" stroke-width="1.2"/></svg><div class="a" style="left:357px;top:246px;width:1px;height:3px;background:#a8a490"></div><div class="a" style="left:366px;top:245px;width:1px;height:4px;background:#a8a490"></div><div class="a" style="left:374px;top:246px;width:1px;height:3px;background:#a8a490"></div><div class="a" style="left:383px;top:242px;width:1px;height:4px;background:#a8a490"></div><svg class="a" style="left:379px;top:245px" width="9" height="5" viewBox="0 0 9 5"><path d="M0.7 4.5 L4.5 0.7 L8.3 4.5Z" fill="#b0b8f0" stroke="#2818c8" stroke-width="1.2"/></svg><div class="a" style="left:392px;top:246px;width:1px;height:3px;background:#a8a490"></div><div class="a" style="left:400px;top:245px;width:1px;height:4px;background:#a8a490"></div><div class="a" style="left:409px;top:246px;width:1px;height:3px;background:#a8a490"></div><div class="a" style="left:418px;top:238px;width:1px;height:11px;background:#a8a490"></div><div class="a" style="left:418px;top:242px;width:1px;height:4px;background:#a8a490"></div><svg class="a" style="left:414px;top:245px" width="9" height="5" viewBox="0 0 9 5"><path d="M0.7 4.5 L4.5 0.7 L8.3 4.5Z" fill="#b0b8f0" stroke="#2818c8" stroke-width="1.2"/></svg><div class="a" style="left:426px;top:246px;width:1px;height:3px;background:#a8a490"></div><div class="a" style="left:435px;top:245px;width:1px;height:4px;background:#a8a490"></div><div class="a" style="left:444px;top:246px;width:1px;height:3px;background:#a8a490"></div><div class="a" style="left:452px;top:242px;width:1px;height:4px;background:#a8a490"></div><svg class="a" style="left:448px;top:245px" width="9" height="5" viewBox="0 0 9 5"><path d="M0.7 4.5 L4.5 0.7 L8.3 4.5Z" fill="#b0b8f0" stroke="#2818c8" stroke-width="1.2"/></svg><div class="a" style="left:461px;top:246px;width:1px;height:3px;background:#a8a490"></div><div class="a" style="left:470px;top:245px;width:1px;height:4px;background:#a8a490"></div><div class="a" style="left:478px;top:246px;width:1px;height:3px;background:#a8a490"></div><div class="a" style="left:487px;top:238px;width:1px;height:11px;background:#a8a490"></div><div class="a" style="left:487px;top:242px;width:1px;height:4px;background:#a8a490"></div><svg class="a" style="left:483px;top:245px" width="9" height="5" viewBox="0 0 9 5"><path d="M0.7 4.5 L4.5 0.7 L8.3 4.5Z" fill="#b0b8f0" stroke="#2818c8" stroke-width="1.2"/></svg><div class="a" style="left:496px;top:246px;width:1px;height:3px;background:#a8a490"></div><div class="a" style="left:504px;top:245px;width:1px;height:4px;background:#a8a490"></div><div class="a" style="left:513px;top:246px;width:1px;height:3px;background:#a8a490"></div><div class="a" style="left:522px;top:242px;width:1px;height:4px;background:#a8a490"></div><svg class="a" style="left:518px;top:245px" width="9" height="5" viewBox="0 0 9 5"><path d="M0.7 4.5 L4.5 0.7 L8.3 4.5Z" fill="#b0b8f0" stroke="#2818c8" stroke-width="1.2"/></svg><div class="a" style="left:530px;top:246px;width:1px;height:3px;background:#a8a490"></div><div class="a" style="left:539px;top:245px;width:1px;height:4px;background:#a8a490"></div><div class="a" style="left:548px;top:246px;width:1px;height:3px;background:#a8a490"></div><div class="a" style="left:556px;top:238px;width:1px;height:11px;background:#a8a490"></div><div class="a" style="left:556px;top:242px;width:1px;height:4px;background:#a8a490"></div><svg class="a" style="left:552px;top:245px" width="9" height="5" viewBox="0 0 9 5"><path d="M0.7 4.5 L4.5 0.7 L8.3 4.5Z" fill="#b0b8f0" stroke="#2818c8" stroke-width="1.2"/></svg><div class="a" style="left:565px;top:246px;width:1px;height:3px;background:#a8a490"></div><div class="a" style="left:574px;top:245px;width:1px;height:4px;background:#a8a490"></div><div class="a" style="left:583px;top:246px;width:1px;height:3px;background:#a8a490"></div><div class="a" style="left:591px;top:242px;width:1px;height:4px;background:#a8a490"></div><svg class="a" style="left:587px;top:245px" width="9" height="5" viewBox="0 0 9 5"><path d="M0.7 4.5 L4.5 0.7 L8.3 4.5Z" fill="#b0b8f0" stroke="#2818c8" stroke-width="1.2"/></svg><div class="a" style="left:600px;top:246px;width:1px;height:3px;background:#a8a490"></div><div class="a" style="left:609px;top:245px;width:1px;height:4px;background:#a8a490"></div><div class="a" style="left:617px;top:246px;width:1px;height:3px;background:#a8a490"></div><div class="a" style="left:626px;top:238px;width:1px;height:11px;background:#a8a490"></div><div class="a" style="left:626px;top:242px;width:1px;height:4px;background:#a8a490"></div><svg class="a" style="left:622px;top:245px" width="9" height="5" viewBox="0 0 9 5"><path d="M0.7 4.5 L4.5 0.7 L8.3 4.5Z" fill="#b0b8f0" stroke="#2818c8" stroke-width="1.2"/></svg><div class="a" style="left:635px;top:246px;width:1px;height:3px;background:#a8a490"></div><div class="a" style="left:643px;top:245px;width:1px;height:4px;background:#a8a490"></div><div class="a" style="left:652px;top:246px;width:1px;height:3px;background:#a8a490"></div><div class="a" style="left:661px;top:242px;width:1px;height:4px;background:#a8a490"></div><svg class="a" style="left:657px;top:245px" width="9" height="5" viewBox="0 0 9 5"><path d="M0.7 4.5 L4.5 0.7 L8.3 4.5Z" fill="#b0b8f0" stroke="#2818c8" stroke-width="1.2"/></svg><div class="a" style="left:669px;top:246px;width:1px;height:3px;background:#a8a490"></div><div class="a" style="left:678px;top:245px;width:1px;height:4px;background:#a8a490"></div><div class="a" style="left:687px;top:246px;width:1px;height:3px;background:#a8a490"></div>
  <svg class="a" style="left:66px;top:237px" width="13" height="14" viewBox="0 0 13 14"><path d="M0 1 H5 V13 L0 9Z" fill="#a4acee"/><path d="M5 7 L12 1 V13Z" fill="#c8ccf4"/><path d="M5 1 V13.5" stroke="#2818c8" stroke-width="1.6"/><path d="M5 7 L12 1 M5 7 L12 13 H4.5" stroke="#2818c8" stroke-width="1.4" fill="none"/></svg>
  <svg class="a" style="left:691px;top:237px" width="13" height="14" viewBox="0 0 13 14"><path d="M0.5 13.5 L6 7.5 L0.5 1.5 H12 V9 L6.5 13.5Z" fill="#a0a8ec"/><path d="M6 1 V13.5 M11.5 1 V9.5 L6.5 13.5 M0.5 13.5 H6.5 M0.5 1.5 L6 7.5 L0.5 13.5" stroke="#2818c8" stroke-width="1.3" fill="none"/></svg>
  <!-- editor -->
  <div class="a" style="left:46px;top:330px;width:260px;height:113px;overflow:hidden">
  <svg width="260" height="113" viewBox="0 0 260 113">
   <path d="M17 57 Q24 44 37 39 Q31 52 50 70 Q30 66 17 57Z" fill="#e8e4d0"/>
   <path d="M56 78 V113" stroke="#e4e0cc" stroke-width="2"/>
   <path d="M78 113 Q84 98 96 92 Q90 102 88 113Z" fill="#d8d6cc"/>
   <path d="M97 70 Q110 40 140 19" stroke="#f0d0b0" stroke-width="2.5" fill="none"/>
   <path d="M108 56 Q115 45 123 38" stroke="#e8e0c8" stroke-width="2" fill="none"/>
   <path d="M100 23 Q110 20 118 25" stroke="#ece6d4" stroke-width="3" fill="none"/>
   <path d="M146 105 H160" stroke="#ece6d4" stroke-width="2" stroke-dasharray="2 2"/>
  </svg></div>
  <div class="t" style="left:71px;top:261px;font-size:12px;line-height:15.5px;font-weight:bold;font-style:italic;letter-spacing:0.22px;color:#000">Dear Parents,

September is a busy month for all of us as we readjust to our routines.

If you have not already done so, please familiarize yourself with the SCI 102 conference. The Course Map
is where you can see what lessons and assignments your child has been given. The Calendar is where I
post homework assignments and important dates.

This month, we will be learning about ecosystems in Science class. Students will learn about the various
components of an ecosystem, and will have a chance to view a live ecosystem in our lab work. We will
also study microorganisms and the carbon cycle.</div>
  <!-- editor vscroll -->
  <div class="a" style="left:709px;top:251px;width:15px;height:192px;background:#fcfbf9"></div>
  <div class="a" style="left:710px;top:251px;width:13px;height:14px;border-radius:2px;background:linear-gradient(90deg,#c8d8f8,#b4c8f2);border:1px solid #e0e8fc"></div>
  <svg class="a" style="left:713px;top:255px" width="8" height="6" viewBox="0 0 8 6"><path d="M1 5 L4 2 L7 5" stroke="#4d6185" stroke-width="1.8" fill="none"/></svg>
  <div class="a" style="left:710px;top:266px;width:13px;height:98px;border-radius:2px;background:linear-gradient(90deg,#cadaf9,#b6caf5);border:1px solid #e4ecfc"></div>
  <div class="a" style="left:713px;top:312px;width:7px;height:1px;background:#e8f0fc"></div><div class="a" style="left:713px;top:314px;width:7px;height:1px;background:#e8f0fc"></div><div class="a" style="left:713px;top:316px;width:7px;height:1px;background:#e8f0fc"></div>
  <div class="a" style="left:710px;top:428px;width:13px;height:14px;border-radius:2px;background:linear-gradient(90deg,#c8d8f8,#b4c8f2);border:1px solid #e0e8fc"></div>
  <svg class="a" style="left:713px;top:432px" width="8" height="6" viewBox="0 0 8 6"><path d="M1 1 L4 4 L7 1" stroke="#4d6185" stroke-width="1.8" fill="none"/></svg>
  <!-- status -->
  <div class="a" style="left:6px;top:445px;width:62px;height:17px;background:#fcfbf9;border:1px solid #7f9db9"></div>
  <div class="t" style="left:9px;top:448px;font-size:11px;color:#222">100%</div>
  <div class="a" style="left:41px;top:448px;width:10px;height:12px;border-radius:2px;background:linear-gradient(#c8d8f8,#b4c8f2)"></div>
  <svg class="a" style="left:42px;top:451px" width="8" height="6" viewBox="0 0 8 6"><path d="M1 1 L4 4 L7 1" stroke="#4d6185" stroke-width="1.8" fill="none"/></svg>
  <div class="a" style="left:53px;top:447px;width:13px;height:14px;background:linear-gradient(#c8d8f8,#b4c8f2)"></div>
  <svg class="a" style="left:55px;top:448px" width="9" height="12" viewBox="0 0 9 12"><path d="M1.5 4.5 L4.5 1.5 L7.5 4.5 M1.5 7.5 L4.5 10.5 L7.5 7.5" stroke="#4d6185" stroke-width="1.6" fill="none"/></svg>
</div>

<div id="frame"></div>
</body></html>
